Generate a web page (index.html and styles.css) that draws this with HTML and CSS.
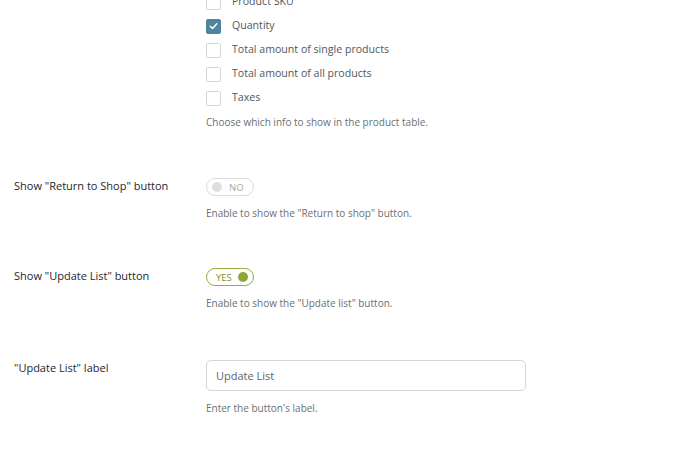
FILE: index.html
```html
<!DOCTYPE html>
<html>
<head>
<meta charset="utf-8">
<link rel="stylesheet" href="styles.css">
</head>
<body>
<div class="form">
  <div class="row first">
    <div class="label"></div>
    <div class="field">
      <ul class="checks">
        <li><span class="box"></span><span>Product SKU</span></li>
        <li><span class="box checked"><svg viewBox="0 0 14 14" width="14" height="14"><path d="M3.5 7.2 L6 9.6 L10.6 4.6" fill="none" stroke="#fff" stroke-width="1.6" stroke-linecap="round" stroke-linejoin="round"/></svg></span><span>Quantity</span></li>
        <li><span class="box"></span><span>Total amount of single products</span></li>
        <li><span class="box"></span><span>Total amount of all products</span></li>
        <li><span class="box"></span><span>Taxes</span></li>
      </ul>
      <p class="desc first-desc">Choose which info to show in the product table.</p>
    </div>
  </div>
  <div class="row">
    <div class="label">Show "Return to Shop" button</div>
    <div class="field">
      <span class="toggle off"><span class="knob"></span><span class="tlabel">NO</span></span>
      <p class="desc">Enable to show the "Return to shop" button.</p>
    </div>
  </div>
  <div class="row">
    <div class="label">Show "Update List" button</div>
    <div class="field">
      <span class="toggle on"><span class="tlabel">YES</span><span class="knob"></span></span>
      <p class="desc">Enable to show the "Update list" button.</p>
    </div>
  </div>
  <div class="row last">
    <div class="label">"Update List" label</div>
    <div class="field">
      <input class="text" type="text" value="Update List">
      <p class="desc">Enter the button's label.</p>
    </div>
  </div>
</div>
</body>
</html>
```

FILE: styles.css
```css
html, body {
  margin: 0;
  padding: 0;
  background: #fff;
}
body {
  font-family: "Open Sans", "Noto Sans", sans-serif;
  color: #3c434a;
  overflow: hidden;
}
.form {
  display: flex;
  flex-direction: column;
  gap: 48px;
  margin-top: -11px;
}
.row {
  display: grid;
  grid-template-columns: 206px 320px;
}
.row.first { padding-bottom: 1px; }
.row.last { padding-top: 2px; }
.label {
  padding-left: 14px;
  font-size: 11px;
  line-height: 15px;
  color: #23282d;
}
.field {
  display: flex;
  flex-direction: column;
  align-items: flex-start;
}
.checks {
  list-style: none;
  margin: 0;
  padding: 0;
}
.checks li {
  height: 24px;
  display: flex;
  align-items: center;
  gap: 11px;
  font-size: 10.6px;
  color: #50575e;
}
.box {
  width: 13px;
  height: 13px;
  border: 1px solid #d5d5d5;
  border-radius: 2px;
  box-sizing: content-box;
  display: flex;
  align-items: center;
  justify-content: center;
  margin-top: 2px;
}
.box.checked {
  background: #4e849c;
  border-color: #4e849c;
}
.box svg { display: block; }
.desc {
  margin: 10px 0 0;
  font-size: 10px;
  line-height: 14px;
  color: #6b6f73;
}
.first-desc { margin-top: 6px; }
.toggle {
  box-sizing: border-box;
  width: 48px;
  height: 18px;
  border: 1px solid #dcdcdc;
  border-radius: 9px;
  display: flex;
  align-items: center;
  padding: 0 6px 0 5px;
  gap: 7px;
  font-size: 9.5px;
}
.toggle .knob {
  width: 10px;
  height: 10px;
  border-radius: 50%;
  background: #dedede;
}
.toggle.off .tlabel { color: #a7a7a7; }
.toggle.on {
  border-color: #95ad3c;
  padding: 0 5px 0 9px;
  gap: 6px;
}
.toggle.on .tlabel { color: #7d9130; }
.toggle.on .knob { background: #8ea638; }
.text {
  box-sizing: border-box;
  width: 320px;
  height: 31px;
  border: 1px solid #d6d6d6;
  border-radius: 5px;
  padding: 0 9px;
  font-family: inherit;
  font-size: 11px;
  color: #5f6368;
  outline: none;
}
```
